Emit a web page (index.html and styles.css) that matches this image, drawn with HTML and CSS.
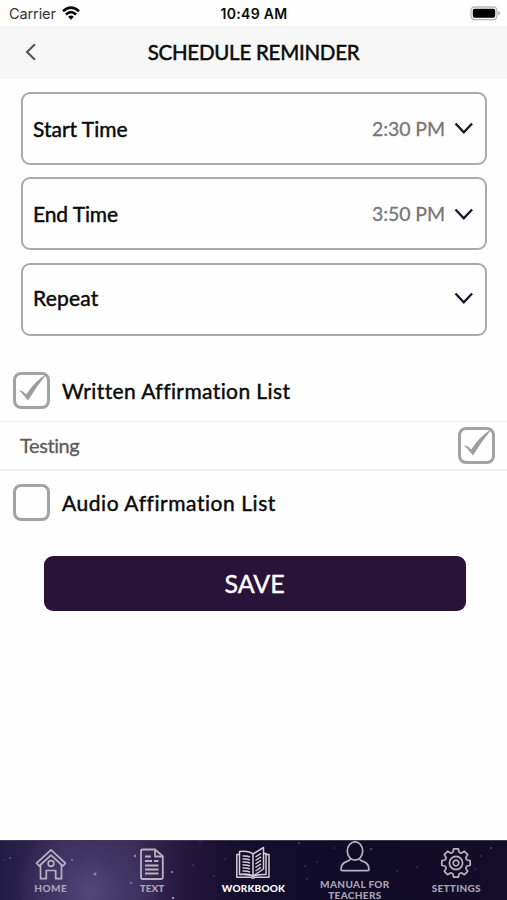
FILE: index.html
```html
<!DOCTYPE html>
<html lang="en">
<head>
<meta charset="utf-8">
<title>Schedule Reminder</title>
<link rel="stylesheet" href="styles.css">
</head>
<body>
<div class="status">
  <div class="carrier"><span>Carrier</span>
    <svg width="18" height="14" viewBox="0 0 18 14"><g fill="none" stroke="#080808" stroke-width="2.5"><path d="M1 5.2Q9-2 17 5.2"/><path d="M3.9 8.5Q9 3.8 14.1 8.5"/></g><path d="M6.1 10.7Q9 8.5 11.9 10.7L9 13.7Z" fill="#080808"/></svg>
  </div>
  <div class="clock">10:49 AM</div>
  <svg class="battery" width="31" height="15" viewBox="0 0 31 15"><rect x="1" y="1" width="26" height="12.6" rx="3.6" fill="#fff" stroke="#b8b8b8" stroke-width="1.3"/><rect x="2.8" y="2.8" width="22.4" height="9" rx="1.8"/><path d="M28.4 5v4.6q1.6-.8 1.6-2.3t-1.6-2.3" fill="#aaa"/></svg>
</div>
<header class="header">
  <svg class="back" width="12" height="18" viewBox="0 0 12 18"><path d="M10 1.2 2 9l8 7.8" fill="none" stroke="#555" stroke-width="2.1"/></svg>
  <h1>SCHEDULE REMINDER</h1>
</header>
<main>
  <section class="fields">
    <div class="field"><span class="name start">Start Time</span><span class="time">2:30 PM</span><svg class="chev" width="20" height="13" viewBox="0 0 20 13"><path d="m1.5 1.5 8.3 8.8 8.3-8.8" fill="none" stroke="#1b1530" stroke-width="2.3"/></svg></div>
    <div class="field"><span class="name end">End Time</span><span class="time">3:50 PM</span><svg class="chev" width="20" height="13" viewBox="0 0 20 13"><path d="m1.5 1.5 8.3 8.8 8.3-8.8" fill="none" stroke="#1b1530" stroke-width="2.3"/></svg></div>
    <div class="field last"><span class="name repeat">Repeat</span><svg class="chev" width="20" height="13" viewBox="0 0 20 13"><path d="m1.5 1.5 8.3 8.8 8.3-8.8" fill="none" stroke="#1b1530" stroke-width="2.3"/></svg></div>
  </section>
  <div class="group written"><span class="check"><svg width="37" height="37" viewBox="0 0 37 37"><path d="M7 18q4 1 7.200 4.400Q22 10 35 1.500 24.500 14.500 16 28.500 12 23.500 7 18Z" fill="#9d9d9d"/></svg></span><span class="title">Written Affirmation List</span></div>
  <div class="item"><span class="item-name">Testing</span><span class="check"><svg width="37" height="37" viewBox="0 0 37 37"><path d="M7 18q4 1 7.200 4.400Q22 10 35 1.500 24.500 14.500 16 28.500 12 23.500 7 18Z" fill="#9d9d9d"/></svg></span></div>
  <div class="group audio"><span class="check"></span><span class="title">Audio Affirmation List</span></div>
  <button class="save">SAVE</button>
</main>
<nav class="tabs">
  <svg class="stars" width="507" height="60" viewBox="0 0 507 60"><g fill="#8d86a8"><circle cx="95" cy="33" r="1.6"/><circle cx="135" cy="15" r="1.2"/><circle cx="131" cy="42" r=".9"/><circle cx="172" cy="31" r="1.1"/><circle cx="173" cy="57" r="1.3"/><circle cx="72" cy="19" r="1"/><circle cx="10" cy="17" r=".8"/></g><g fill="#514a70"><circle cx="4" cy="19" r=".8"/><circle cx="107" cy="12" r=".8"/><circle cx="193" cy="24" r=".8"/><circle cx="200" cy="1" r=".8"/><circle cx="214" cy="35" r=".8"/><circle cx="225" cy="18" r=".7"/><circle cx="299" cy="2" r=".9"/><circle cx="305" cy="25" r=".8"/><circle cx="307" cy="38" r=".8"/><circle cx="317" cy="21" r=".7"/><circle cx="334" cy="7" r=".8"/><circle cx="371" cy="8" r="1"/><circle cx="397" cy="30" r=".8"/><circle cx="417" cy="26" r=".8"/><circle cx="475" cy="28" r=".7"/><circle cx="481" cy="15" r=".8"/><circle cx="491" cy="7" r="1"/></g></svg>
  <a class="tab"><svg class="icon" width="34" height="34" viewBox="0 0 34 34"><g fill="none" stroke="#b9b2bf" stroke-width="1.700" stroke-linejoin="round"><path d="M17 2.800 2.600 16.200 5.200 19 17 8.200 28.800 19 31.400 16.200Z"/><path d="M6.500 18v13.700h5.800V23.500h9.400v8.200h5.800V18"/><circle cx="17" cy="16.500" r="2.900"/></g></svg><span class="label home">HOME</span></a>
  <a class="tab"><svg class="icon" width="34" height="34" viewBox="0 0 34 34"><g fill="none" stroke="#b9b2bf" stroke-width="1.8" stroke-linejoin="round"><path d="M7.500 2.500h12.500l7.800 6.800v21.200q0 1.500-1.500 1.500H7.500Q6 32 6 30.500V4q0-1.500 1.500-1.500Z"/><path d="M20 2.500v7h7.800M10 9.500h6M10 14h7m2 0h4.500M10 18.500h13.500M10 22.500h13.500M10 26.500h13.500"/></g></svg><span class="label text">TEXT</span></a>
  <a class="tab active"><svg class="icon" width="36" height="36" viewBox="0 0 36 36"><g fill="none" stroke="#d2ced9" stroke-width="1.500" stroke-linejoin="round"><path d="M18 30V8Q14 4.500 4.500 5.500V28.500Q14 27 18 30L28.500 23V1.500L18 8"/><path d="M28.500 7.500h2.500v21q-9-.5-13 2-4-2.500-13-2"/><path d="M4.500 8.500h-2.700v22.700H16q2 2 4 0h14V8.500h-3"/><path d="M7.500 10q5-.4 7.500 1.100M7.500 13q5-.4 7.500 1.100M7.500 16q5-.4 7.500 1.100M7.500 19q5-.4 7.500 1.100M7.500 22q5-.4 7.500 1.100M7.500 25q5-.4 7.500 1.100M20.500 11l5.500-3.700M20.500 14.500l5.500-3.700M20.500 18l5.500-3.700M20.500 21.500l5.500-3.700M20.500 25l5.500-3.700"/></g></svg><span class="label workbook">WORKBOOK</span></a>
  <a class="tab manual"><svg class="icon" width="34" height="34" viewBox="0 0 34 34"><g fill="none" stroke="#b9b2bf" stroke-width="1.700" stroke-linejoin="round"><ellipse cx="17" cy="12" rx="7.700" ry="9.200"/><path d="M12.500 20q-.5 1.500-4 2.600Q3 24.500 3 30.500q0 1.200 1.200 1.200h25.600q1.200 0 1.200-1.200 0-6-5.500-7.900-3.500-1.100-4-2.600"/></g></svg><span class="label">MANUAL FOR<br>TEACHERS</span></a>
  <a class="tab"><svg class="icon gear" width="34" height="34" viewBox="-17 -17 34 34"><g fill="none" stroke="#b9b2bf" stroke-width="1.700" stroke-linejoin="round"><path d="M-3.200-10.700-2.300-14.200H2.300L3.200-10.700 5.300-9.800 8.400-11.700 11.700-8.400 9.800-5.300 10.700-3.200 14.200-2.300V2.300L10.700 3.200 9.800 5.300 11.700 8.400 8.400 11.700 5.300 9.800 3.200 10.700 2.300 14.200H-2.300L-3.200 10.700-5.300 9.800-8.400 11.700-11.700 8.400-9.800 5.300-10.700 3.200-14.200 2.300V-2.300L-10.700-3.200-9.800-5.300-11.700-8.400-8.400-11.700-5.300-9.800Z"/><circle r="6.600"/><circle r="2.800"/></g></svg><span class="label settings">SETTINGS</span></a>
</nav>
</body>
</html>
```
FILE: styles.css
```css
* { box-sizing: border-box; }
body { margin: 0; width: 507px; height: 900px; overflow: hidden; display: flex; flex-direction: column; background: #fefefe; color: #0a0a0a; font-family: Lato, "Liberation Sans", sans-serif; }
svg { display: block; flex: none; }
.status { height: 26px; padding: 1px 6px 0 9px; display: grid; grid-template-columns: 1fr auto 1fr; align-items: center; font: 14.500px Inter, sans-serif; }
.carrier { display: flex; align-items: center; gap: 6px; color: #333; letter-spacing: -.1px; }
.carrier svg { margin-top: -2px; }
.clock { font-weight: 600; font-size: 14px; letter-spacing: .3px; position: relative; left: -1px; }
.battery { justify-self: end; margin-top: -1px; }
.header { height: 53px; background: #f7f7f7; display: grid; grid-template-columns: 60px 1fr 60px; align-items: center; padding-bottom: 2px; }
.back { margin-left: 25px; }
h1 { margin: 0; text-align: center; font-size: 20.500px; line-height: 26px; font-weight: 400; letter-spacing: -.25px; -webkit-text-stroke: .5px; white-space: nowrap; }
main { flex: 1; }
.fields { padding: 12.500px 20px 0 20.500px; display: grid; gap: 12.500px; }
.field { height: 73px; border: 2px solid #aaa; border-radius: 9px; padding: 0 11px 0 10.500px; display: flex; align-items: center; }
.name { font-size: 21px; flex: 1; -webkit-text-stroke: .45px; }
.end { letter-spacing: -.1px; }
.repeat { letter-spacing: .2px; }
.last { padding-bottom: 3px; }
.time { font-size: 19.500px; color: #777; -webkit-text-stroke: .3px; letter-spacing: -.1px; margin-right: 9px; }
.chev { margin-top: 1px; }
.group { display: flex; align-items: center; padding-left: 13px; gap: 12px; }
.written { height: 61px; margin-top: 24px; }
.audio { height: 63px; }
.check { width: 37px; height: 37px; border: 3.500px solid #a3a3a3; border-radius: 8px; flex: none; }
.check svg { margin: -3px 0 0 -4px; }
.title { font-size: 21px; -webkit-text-stroke: .45px; white-space: nowrap; letter-spacing: .4px; }
.audio .title { letter-spacing: .55px; }
.item { height: 50px; border-top: 1.500px solid #eee; border-bottom: 2px solid #f2f2f2; display: flex; align-items: center; justify-content: space-between; padding: 0 12px 0 20px; }
.item-name { font-size: 20px; color: #5b5b5b; -webkit-text-stroke: .3px; letter-spacing: -.4px; }
.save { display: block; width: 422px; height: 55px; margin: 22.500px 0 0 43.500px; border: 0; border-radius: 9px; background: #291339; color: #fff; font: 25px/55px Lato, sans-serif; padding: 0; -webkit-text-stroke: .4px; }
.tabs { height: 60px; position: relative; display: grid; grid-template-columns: repeat(5, 1fr); background: radial-gradient(ellipse 75px 70px at 90px 50px, #51477a 0, #403566 50%, transparent 100%), linear-gradient(90deg, #211b43, #382c58 12%, #3a2c57 26%, #25173e 36%, #130e2b 48%, #100b27 70%, #130d29); border-top: 1px solid #3d3850; overflow: hidden; }
.stars { position: absolute; left: 0; top: 0; }
.tab { position: relative; display: flex; flex-direction: column; align-items: center; padding-top: 5px; color: #aaa4b2; }
.icon { height: 36px; }
.label { margin-top: 1px; font-size: 10px; line-height: 11px; font-weight: 900; text-align: center; white-space: nowrap; }
.home { letter-spacing: .4px; }
.workbook { letter-spacing: .2px; }
.settings { letter-spacing: .3px; }
.active { color: #fff; }
.manual { padding-top: 0; }
.manual .icon { margin-top: -3px; }
.manual .label { margin-top: 5px; letter-spacing: .35px; }
.gear { margin-top: -1px; margin-bottom: 1px; }
```
